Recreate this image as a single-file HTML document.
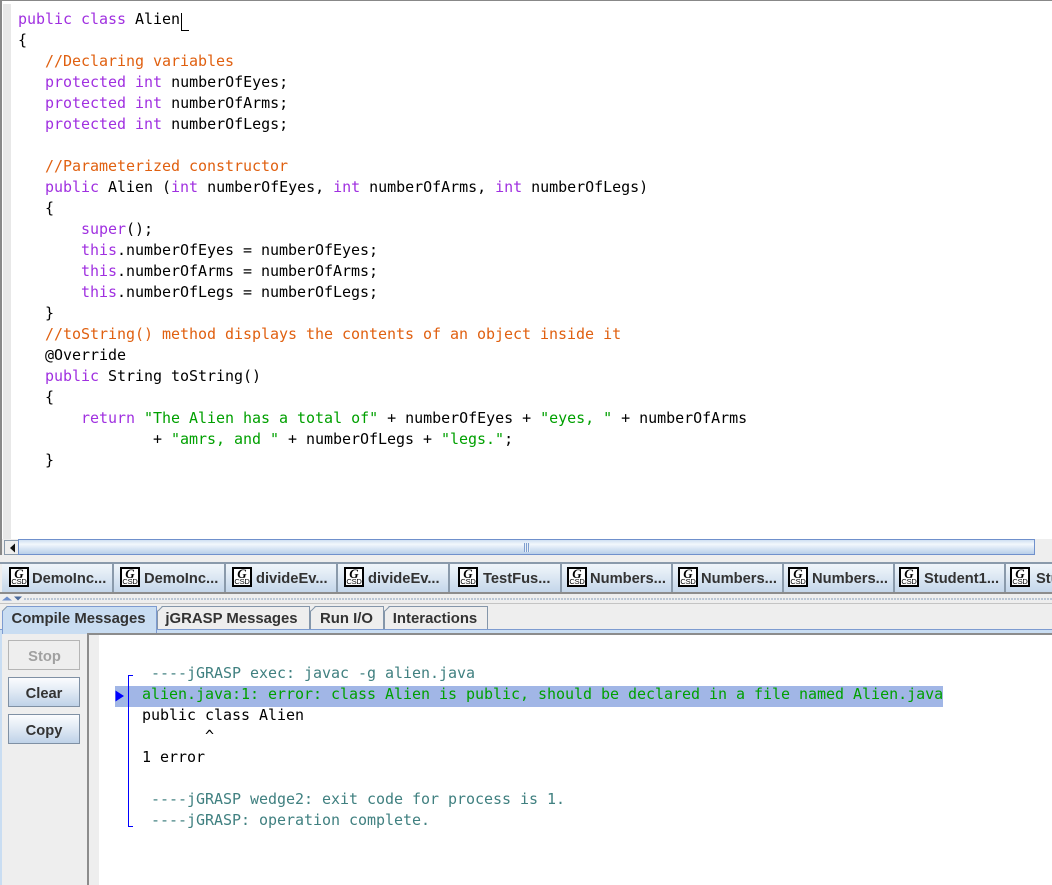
<!DOCTYPE html>
<html><head><meta charset="utf-8">
<style>
html,body{margin:0;padding:0;background:#eeeeee}
#r{position:relative;width:1052px;height:885px;overflow:hidden;background:#eeeeee;font-family:"Liberation Sans",sans-serif}
.a{position:absolute}
.c{position:absolute;font:15px/21px "DejaVu Sans Mono",monospace;letter-spacing:-0.03px;white-space:pre;color:#000}
.k{color:#a030e0}.g{color:#e06010}.s{color:#00a000}.t{color:#408080}
.tab{position:absolute;top:564px;height:28px;box-sizing:border-box;border-right:2px solid #8a9aab;background:linear-gradient(#f0f5fa,#e4edf6 30%,#c4d6ea);font-weight:bold;font-size:14.7px;line-height:30px;color:#333;white-space:nowrap;overflow:hidden}
.tab span{position:absolute;top:0}
.ic{position:absolute;top:3px;width:20px;height:20px;box-sizing:border-box;border:2px solid #000;background:#fff;color:#000;text-align:center}
.ic b{position:absolute;left:0;right:0;top:0;font:italic bold 13px/10px "Liberation Serif",serif}
.ic i{position:absolute;left:0;right:0;top:9px;font:normal 7.5px/7px "Liberation Sans",sans-serif;letter-spacing:-0.2px}
.mt{position:absolute;top:606px;height:24px;box-sizing:border-box;padding-right:2px;border:1px solid #8496aa;border-bottom:0;background:#eeeeee;font-weight:bold;font-size:14.9px;line-height:24px;color:#333;text-align:center;clip-path:polygon(5px 0,100% 0,100% 100%,0 100%,0 5px)}
.btn{position:absolute;left:8px;width:72px;height:30px;box-sizing:border-box;border:1px solid #7f90a4;background:linear-gradient(#fbfcfe,#e8eff7 35%,#bfd2e8);font-weight:bold;font-size:14.7px;line-height:32px;text-align:center;color:#333}
</style></head><body><div id="r">

<!-- editor -->
<div class="a" style="left:0;top:0;width:1052px;height:539px;background:#fff"></div>
<div class="a" style="left:0;top:0;width:1052px;height:1px;background:#888"></div>
<div class="a" style="left:0;top:0;width:2px;height:555px;background:#888"></div>
<div class="a" style="left:3px;top:4px;width:8px;height:535px;background:#e8e8e8"></div>

<div class="c" style="left:18px;top:9px"><span class="k">public</span> <span class="k">class</span> Alien
{
   <span class="g">//Declaring variables</span>
   <span class="k">protected</span> <span class="k">int</span> numberOfEyes;
   <span class="k">protected</span> <span class="k">int</span> numberOfArms;
   <span class="k">protected</span> <span class="k">int</span> numberOfLegs;

   <span class="g">//Parameterized constructor</span>
   <span class="k">public</span> Alien (<span class="k">int</span> numberOfEyes, <span class="k">int</span> numberOfArms, <span class="k">int</span> numberOfLegs)
   {
       <span class="k">super</span>();
       <span class="k">this</span>.numberOfEyes = numberOfEyes;
       <span class="k">this</span>.numberOfArms = numberOfArms;
       <span class="k">this</span>.numberOfLegs = numberOfLegs;
   }
   <span class="g">//toString() method displays the contents of an object inside it</span>
   @Override
   <span class="k">public</span> String toString()
   {
       <span class="k">return</span> <span class="s">"The Alien has a total of"</span> + numberOfEyes + <span class="s">"eyes, "</span> + numberOfArms
               + <span class="s">"amrs, and "</span> + numberOfLegs + <span class="s">"legs."</span>;
   }</div>
<!-- caret -->
<div class="a" style="left:181px;top:13px;width:1px;height:18px;background:#000"></div>
<div class="a" style="left:181px;top:30px;width:8px;height:1px;background:#000"></div>

<!-- hscroll -->
<div class="a" style="left:2px;top:539px;width:1050px;height:16px;background:#eeeeee"></div>
<div class="a" style="left:4px;top:540px;width:15px;height:15px;box-sizing:border-box;border:1px solid #8a9aab;background:#eeeeee"></div>
<svg class="a" style="left:8px;top:543px" width="8" height="10"><path d="M2 5 L7 0.5 V9.5Z" fill="#111"/></svg>
<div class="a" style="left:18px;top:539px;width:1017px;height:16px;box-sizing:border-box;border:1px solid #6f90cc;background:linear-gradient(#cfdff2,#f2f7fc 30%,#d8e5f4 60%,#b9cfe9)"></div>
<div class="a" style="left:524px;top:543px;width:6px;height:9px;background:repeating-linear-gradient(90deg,#7f9fd0 0 1px,#e8f0f8 1px 2px)"></div>

<!-- file tab bar -->
<div class="a" style="left:0;top:562px;width:1052px;height:2px;background:#8a9aab"></div>
<div class="tab" style="left:2px;width:112px"><div class="ic" style="left:7px"><b>G</b><i>CSD</i></div><span style="left:30px">DemoInc...</span></div>
<div class="tab" style="left:114px;width:112px"><div class="ic" style="left:6px"><b>G</b><i>CSD</i></div><span style="left:30px">DemoInc...</span></div>
<div class="tab" style="left:226px;width:112px"><div class="ic" style="left:6px"><b>G</b><i>CSD</i></div><span style="left:30px">divideEv...</span></div>
<div class="tab" style="left:338px;width:112px"><div class="ic" style="left:6px"><b>G</b><i>CSD</i></div><span style="left:30px">divideEv...</span></div>
<div class="tab" style="left:450px;width:112px"><div class="ic" style="left:8px"><b>G</b><i>CSD</i></div><span style="left:33px">TestFus...</span></div>
<div class="tab" style="left:562px;width:111px"><div class="ic" style="left:5px"><b>G</b><i>CSD</i></div><span style="left:28px">Numbers...</span></div>
<div class="tab" style="left:673px;width:111px"><div class="ic" style="left:5px"><b>G</b><i>CSD</i></div><span style="left:28px">Numbers...</span></div>
<div class="tab" style="left:784px;width:111px"><div class="ic" style="left:4px"><b>G</b><i>CSD</i></div><span style="left:28px">Numbers...</span></div>
<div class="tab" style="left:895px;width:111px"><div class="ic" style="left:4px"><b>G</b><i>CSD</i></div><span style="left:29px">Student1...</span></div>
<div class="tab" style="left:1006px;width:60px"><div class="ic" style="left:4px"><b>G</b><i>CSD</i></div><span style="left:30px">Student</span></div>
<div class="a" style="left:0;top:592px;width:1052px;height:2px;background:#8c8c8c"></div>

<!-- divider -->
<div class="a" style="left:24px;top:598px;width:1028px;height:3px;background-image:radial-gradient(circle at 1px 1px,#a9b9cc 0.8px,transparent 1px);background-size:3px 3px"></div>
<div class="a" style="left:0;top:603px;width:1052px;height:1px;background:#c4c4c4"></div>
<svg class="a" style="left:0;top:595px" width="24" height="7"><path d="M2 5.500 L7 1.500 L12 5.500Z" fill="#6f90cc"/><path d="M14 1.500 H22 L18 5.500Z" fill="#4a6a9c"/></svg>

<!-- message tabs -->
<div class="mt" style="left:157px;width:153px;padding-right:4px">jGRASP Messages</div>
<div class="mt" style="left:310px;width:74px;padding-right:1px">Run I/O</div>
<div class="mt" style="left:384px;width:104px">Interactions</div>
<div class="a" style="left:0;top:629px;width:1052px;height:1px;background:#7d9bd0"></div>
<div class="a" style="left:0;top:630px;width:1052px;height:3px;background:#c9ddf2"></div>
<div class="a" style="left:0;top:630px;width:2px;height:255px;background:#c9ddf2"></div>
<div class="mt" style="left:2px;width:155px;height:28px;border-color:#7d9bd0;background:#c9ddf2">Compile Messages</div>
<svg class="a" style="left:0;top:604px" width="400" height="10"><path d="M2.500 7 L7 2.500M158 7 L162.500 2.500M311 7 L315.500 2.500M385 7 L389.500 2.500" stroke="#8496aa" fill="none"/></svg>

<!-- side buttons -->
<div class="btn" style="top:640px;border-color:#b5b5b5;background:#eeeeee;color:#a0a0a0;padding-left:1px">Stop</div>
<div class="btn" style="top:677px">Clear</div>
<div class="btn" style="top:714px">Copy</div>

<!-- message pane -->
<div class="a" style="left:87px;top:633px;width:965px;height:252px;background:#fff"></div>
<div class="a" style="left:87px;top:633px;width:2px;height:252px;background:#8c8c8c"></div>
<div class="a" style="left:87px;top:633px;width:965px;height:2px;background:#8c8c8c"></div>
<div class="a" style="left:89px;top:635px;width:10px;height:250px;background:#eeeeee"></div>
<div class="a" style="left:99px;top:637px;width:953px;height:248px;background:#fff"></div>

<div class="a" style="left:115px;top:686px;width:828px;height:21px;background:#a1b6e6"></div>
<div class="a" style="left:128px;top:675px;width:1px;height:152px;background:#0000ff"></div>
<div class="a" style="left:128px;top:675px;width:5px;height:1px;background:#0000ff"></div>
<div class="a" style="left:128px;top:826px;width:5px;height:1px;background:#0000ff"></div>
<svg class="a" style="left:115px;top:690px" width="10" height="12"><path d="M0.500 0.500 L9 6 L0.500 11.500Z" fill="#0000ff"/></svg>

<div class="c" style="left:142px;top:663px"> <span class="t">----jGRASP exec: javac -g alien.java</span>
<span class="s">alien.java:1: error: class Alien is public, should be declared in a file named Alien.java</span>
public class Alien
       ^
1 error

 <span class="t">----jGRASP wedge2: exit code for process is 1.</span>
 <span class="t">----jGRASP: operation complete.</span></div>

</div></body></html>
